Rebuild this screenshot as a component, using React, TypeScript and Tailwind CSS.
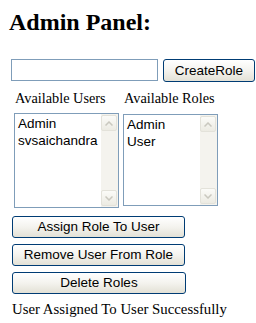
import { ReactNode } from "react";

const ScrollArrow = ({ down }: { down?: boolean }) => (
  <div className="flex h-[16px] w-[16px] items-center justify-center rounded-[2px] border border-[#e3e2da] bg-gradient-to-b from-[#fbfbf8] to-[#ecebe3]">
    <svg width={8} height={5} viewBox="0 0 8 5" className={down ? "rotate-180" : ""}>
      <path d="M0.5 4.5 L4 1 L7.5 4.5" fill="none" stroke="#c9c8bf" strokeWidth={1.5} />
    </svg>
  </div>
);

const ListBox = ({ items, className }: { items: string[]; className: string }) => (
  <div className={`flex border border-[#7f9db9] bg-white ${className}`}>
    <ul className="flex-1 pl-[3px] pt-[1px] font-['Liberation_Sans',Arial,sans-serif] text-[13.5px] leading-[17px] text-black">
      {items.map((item) => (
        <li key={item}>{item}</li>
      ))}
    </ul>
    <div className="flex w-[17px] flex-col justify-between bg-[#f4f3ee] py-[1px] pr-[1px]">
      <ScrollArrow />
      <ScrollArrow down />
    </div>
  </div>
);

const XpButton = ({ children, className }: { children: ReactNode; className: string }) => (
  <button
    className={`rounded-[3px] border border-[#003c74] bg-gradient-to-b from-white via-[#f4f3ee] to-[#e3e1d6] font-['Liberation_Sans',Arial,sans-serif] text-[13.5px] leading-none text-black ${className}`}
  >
    {children}
  </button>
);

export default function App() {
  return (
    <div className="h-[323px] w-[256px] bg-white pl-[9px] font-['Liberation_Serif','Times_New_Roman',serif] text-black">
      <h2 className="pt-[8px] font-['Liberation_Serif','Times_New_Roman',serif] text-[24px] font-bold leading-[28px]">
        Admin Panel:
      </h2>

      <div className="mt-[23px] ml-[2px] flex items-start gap-[5px]">
        <input className="h-[22px] w-[147px] border border-[#7f9db9] bg-white px-1 outline-none" />
        <XpButton className="h-[23px] w-[92px]">CreateRole</XpButton>
      </div>

      <div className="mt-[8px] ml-[5px] flex items-start gap-[4px]">
        <div className="flex flex-col">
          <span className="pl-[1px] text-[14.3px] leading-[16px]">Available Users</span>
          <ListBox items={["Admin", "svsaichandra"]} className="mt-[7px] h-[95px] w-[105px]" />
        </div>
        <div className="flex flex-col">
          <span className="pl-[1px] text-[14.3px] leading-[16px]">Available Roles</span>
          <ListBox items={["Admin", "User"]} className="mt-[8px] h-[92px] w-[95px]" />
        </div>
      </div>

      <div className="mt-[8px] ml-[3px] flex flex-col gap-[6px]">
        <XpButton className="h-[22px] w-[173px]">Assign Role To User</XpButton>
        <XpButton className="h-[22px] w-[173px]">Remove User From Role</XpButton>
        <XpButton className="h-[22px] w-[174px]">Delete Roles</XpButton>
      </div>

      <p className="mt-[5px] ml-[3px] text-[14.8px] leading-[20px]">User Assigned To User Successfully</p>
    </div>
  );
}
